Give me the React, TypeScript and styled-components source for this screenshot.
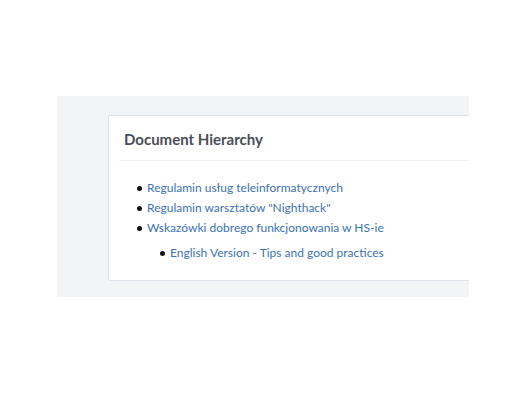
import styled, { createGlobalStyle } from "styled-components"

const GlobalStyle = createGlobalStyle`
    body {
        margin: 0;
        background: #ffffff;
        font-family: Lato, "Liberation Sans", sans-serif;
    }
`

const Page = styled.div`
    padding: 96px 0 0 57px;
`

const Backdrop = styled.div`
    width: 412px;
    height: 201px;
    background: #f3f4f6;
    padding: 19px 0 0 51px;
    box-sizing: border-box;
    overflow: hidden;
`

const Card = styled.div`
    width: 460px;
    height: 166px;
    background: #ffffff;
    border: 1px solid #dce3ea;
    border-radius: 2px;
    box-sizing: border-box;
    padding: 0 0 0 10px;
`

const Title = styled.h2`
    margin: 0;
    padding: 13px 0 11px 5px;
    font-size: 15px;
    font-weight: 700;
    color: #4a4e58;
    border-bottom: 1px solid #edf1f5;
    line-height: 20px;
`

const List = styled.ul<{ $nested?: boolean }>`
    margin: ${(p) => (p.$nested ? "5px 0 0" : "17px 0 0")};
    padding: 0 0 0 ${(p) => (p.$nested ? "23px" : "28px")};
    list-style: none;
`

const Item = styled.li`
    position: relative;
    font-size: 12px;
    line-height: 20px;

    &::before {
        content: "";
        position: absolute;
        left: -10px;
        top: 8px;
        width: 5px;
        height: 5px;
        border-radius: 50%;
        background: #111;
    }
`

const Link = styled.a`
    color: #3b73b3;
    text-decoration: none;
`

export default function App() {
    return (
        <>
            <GlobalStyle />
            <Page>
                <Backdrop>
                    <Card>
                        <Title>Document Hierarchy</Title>
                        <List>
                            <Item><Link href="#">Regulamin usług teleinformatycznych</Link></Item>
                            <Item><Link href="#">Regulamin warsztatów "Nighthack"</Link></Item>
                            <Item>
                                <Link href="#">Wskazówki dobrego funkcjonowania w HS-ie</Link>
                                <List $nested>
                                    <Item><Link href="#">English Version - Tips and good practices</Link></Item>
                                </List>
                            </Item>
                        </List>
                    </Card>
                </Backdrop>
            </Page>
        </>
    )
}
